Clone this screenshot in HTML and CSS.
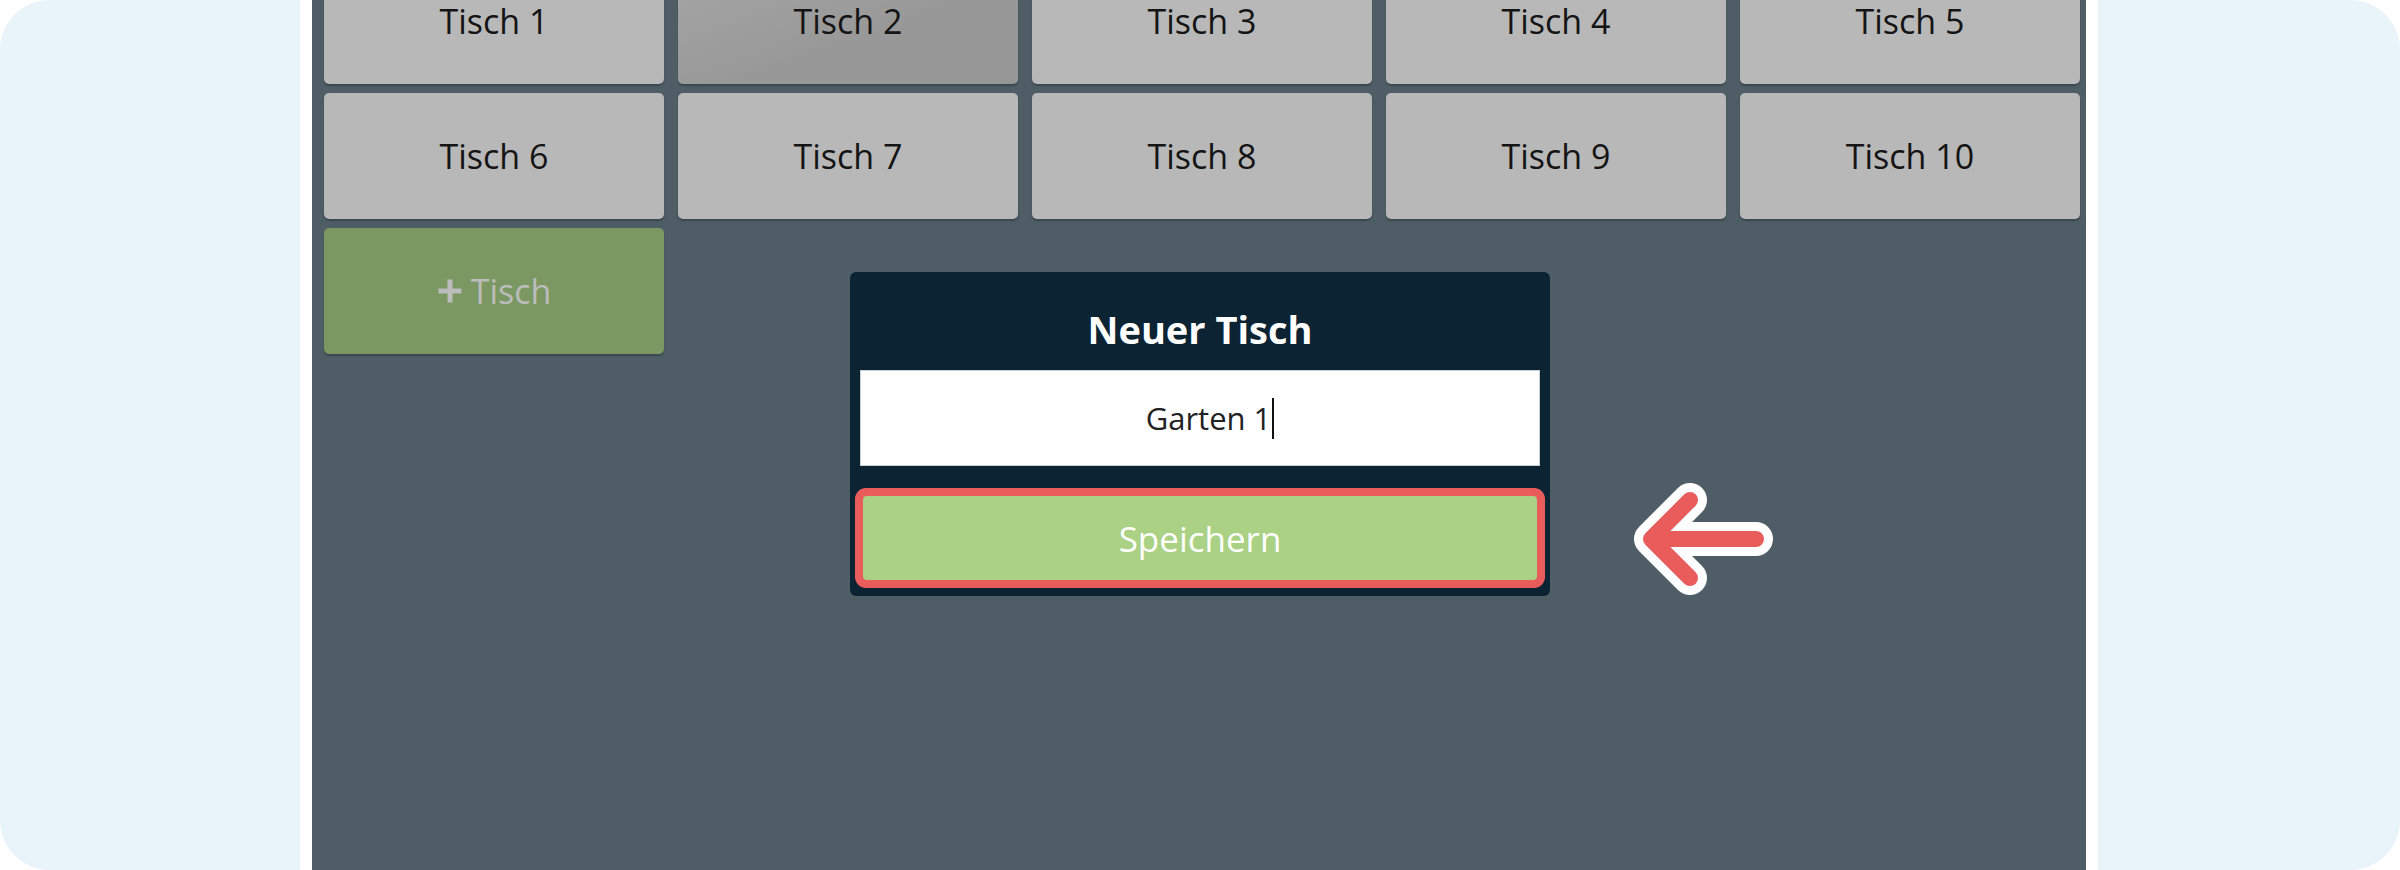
FILE: index.html
```html
<!DOCTYPE html>
<html lang="de">
<head>
<meta charset="utf-8">
<title>Tische</title>
<link rel="stylesheet" href="styles.css">
</head>
<body>
<div class="frame">
  <div class="side"></div>
  <main class="panel">
    <div class="grid">
      <div class="tile">Tisch 1</div>
      <div class="tile active">Tisch 2</div>
      <div class="tile">Tisch 3</div>
      <div class="tile">Tisch 4</div>
      <div class="tile">Tisch 5</div>
      <div class="tile">Tisch 6</div>
      <div class="tile">Tisch 7</div>
      <div class="tile">Tisch 8</div>
      <div class="tile">Tisch 9</div>
      <div class="tile">Tisch 10</div>
      <div class="tile add">
        <svg class="plus" width="26" height="26" viewBox="0 0 26 26"><path d="M13 1.5V24.5M1.5 13H24.5" stroke="currentColor" stroke-width="5" fill="none"/></svg>
        <span>Tisch</span>
      </div>
    </div>

    <div class="dialog">
      <div class="dialog-title">Neuer Tisch</div>
      <div class="field"><span>Garten 1</span><span class="caret"></span></div>
      <div class="save">Speichern</div>
    </div>

    <svg class="arrow" width="170" height="140" viewBox="1620 470 170 140">
      <g fill="none" stroke-linecap="round" stroke-linejoin="round">
        <path d="M1690 500L1651 539L1690 578M1651 539H1756" stroke="#ffffff" stroke-width="34"/>
        <path d="M1690 500L1651 539L1690 578M1651 539H1756" stroke="#e85c5c" stroke-width="16"/>
      </g>
    </svg>
  </main>
  <div class="side"></div>
</div>
</body>
</html>
```
FILE: styles.css
```css
html, body {
  margin: 0;
  padding: 0;
  background: #ffffff;
}
body {
  font-family: "Open Sans", "Noto Sans", "DejaVu Sans", sans-serif;
}
.frame {
  display: flex;
  width: 2400px;
  height: 870px;
  background: #e8f3fa;
  border-radius: 50px;
  overflow: hidden;
}
.side {
  flex: 1 1 auto;
}
.side:first-child {
  flex: 0 0 300px;
}
.panel {
  position: relative;
  flex: 0 0 1798px;
  box-sizing: border-box;
  height: 870px;
  background: #4f5e66;
  border-left: 12px solid #ffffff;
  border-right: 12px solid #ffffff;
  padding-left: 12px;
  overflow: hidden;
}
.grid {
  display: grid;
  grid-template-columns: repeat(5, 340px);
  grid-auto-rows: 126px;
  column-gap: 14px;
  row-gap: 9px;
  margin-top: -42px;
}
.tile {
  display: flex;
  align-items: center;
  justify-content: center;
  background: #b8b8b8;
  border-radius: 5px;
  box-shadow: 0 2px 2px rgba(0, 0, 0, 0.25);
  color: #141414;
  font-size: 34px;
}
.tile.active {
  background: linear-gradient(160deg, #a6a6a6 0%, #989898 60%, #979797 100%);
}
.tile.add {
  background: #7b9862;
  color: #bcbcbc;
  gap: 8px;
}
.plus {
  display: block;
}
.dialog {
  position: absolute;
  left: 538px;
  top: 272px;
  width: 700px;
  box-sizing: border-box;
  padding: 0 10px 16px;
  background: #0c2334;
  border-radius: 6px;
}
.dialog-title {
  padding: 30px 0 13px;
  line-height: 55px;
  font-size: 38px;
  font-weight: 700;
  color: #ffffff;
  text-align: center;
}
.field {
  display: flex;
  align-items: center;
  justify-content: center;
  height: 96px;
  box-sizing: border-box;
  padding-left: 20px;
  background: #ffffff;
  border: 1px solid #c9cfd4;
  color: #222222;
  font-size: 31px;
}
.caret {
  display: block;
  width: 2px;
  height: 41px;
  margin-left: 1px;
  background: #111111;
}
.save {
  display: flex;
  align-items: center;
  justify-content: center;
  height: 84px;
  margin: 30px 3px 0;
  background: #aad184;
  border-radius: 4px;
  box-shadow: 0 0 0 8px #e85c5c;
  color: #ffffff;
  font-size: 35px;
}
.arrow {
  position: absolute;
  left: 1308px;
  top: 470px;
}
```
